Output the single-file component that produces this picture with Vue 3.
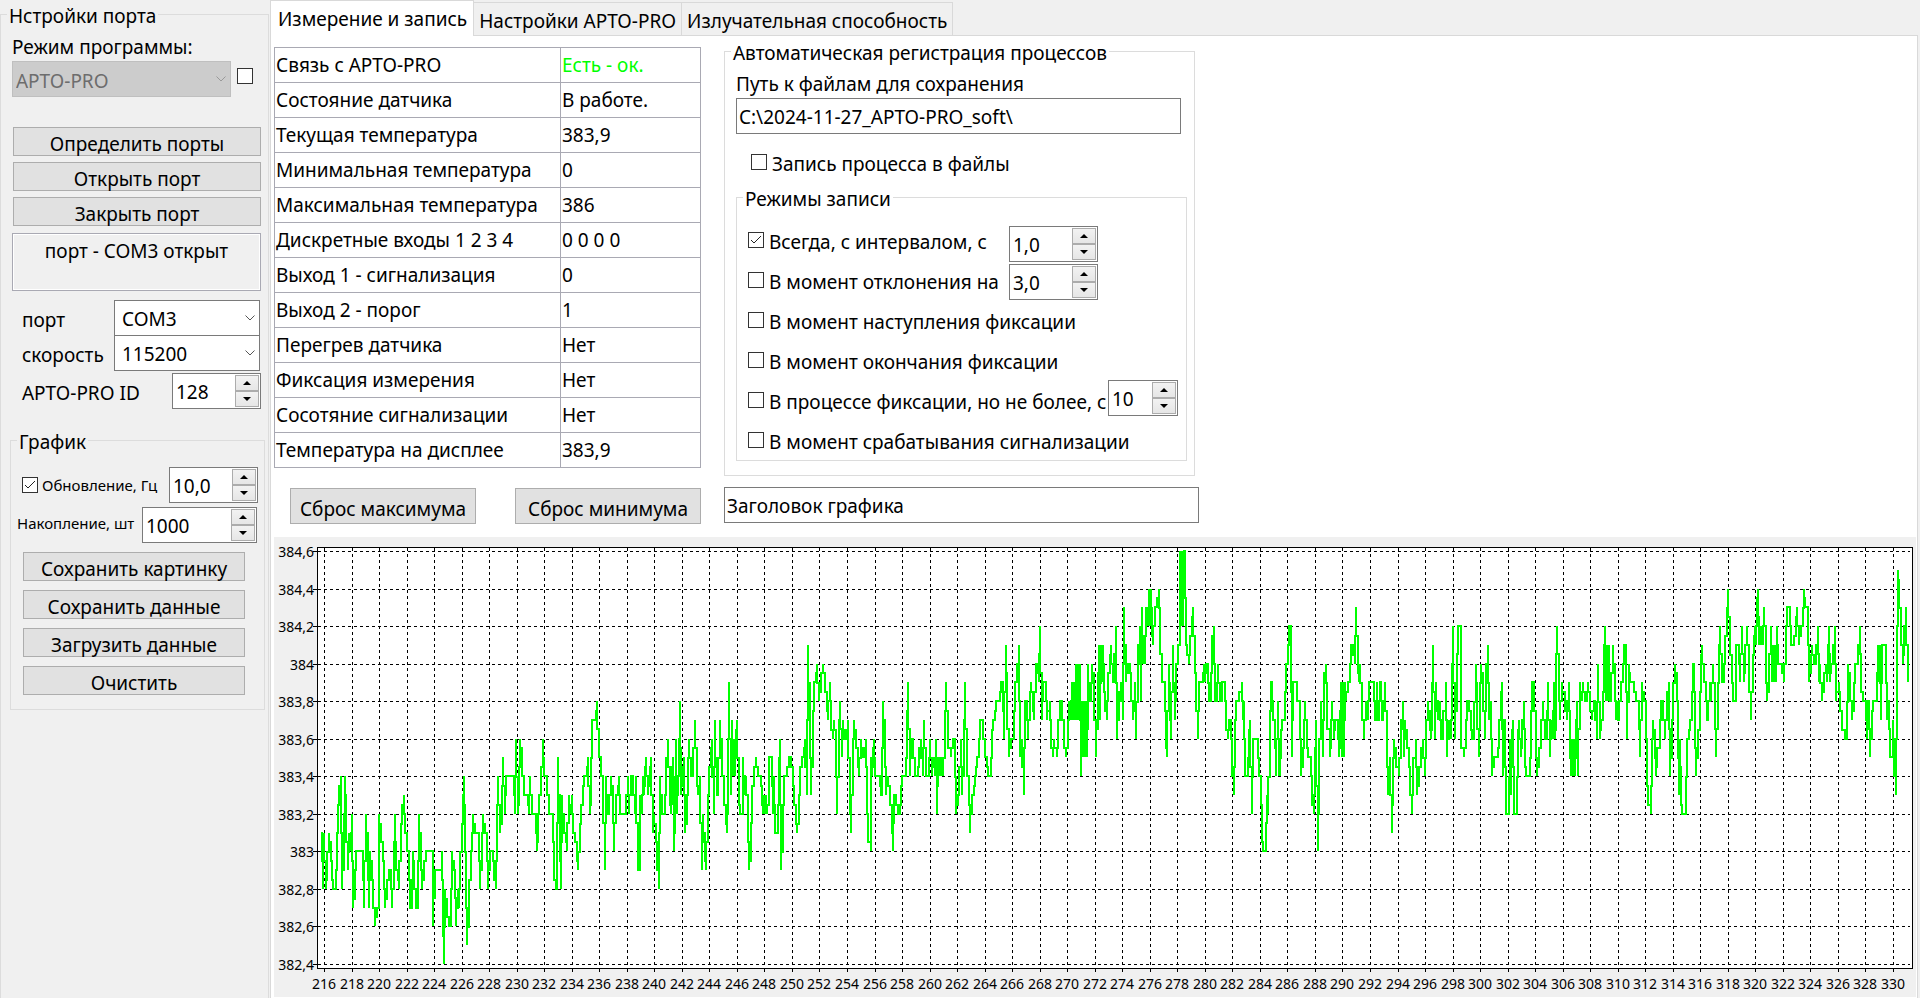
<script setup>
import { ref, computed } from 'vue'

const mode = ref('АРТО-PRO')
const modeUnlocked = ref(false)
const port = ref('COM3')
const speed = ref('115200')
const deviceId = ref('128')
const refresh = ref(true)
const refreshRate = ref('10,0')
const capacity = ref('1000')
const path = ref('C:\\2024-11-27_АРТО-PRO_soft\\')
const record = ref(false)
const interval = ref('1,0')
const deviation = ref('3,0')
const limit = ref('10')
const chartTitle = ref('Заголовок графика')
const modes = ref({ always: true, deviation: false, start: false, end: false, during: false, alarm: false })

const portButtons = ['Определить порты', 'Открыть порт', 'Закрыть порт']
const chartButtons = ['Сохранить картинку', 'Сохранить данные', 'Загрузить данные', 'Очистить']
const tabs = ['Измерение и запись', 'Настройки АРТО-PRO', 'Излучательная способность']
const activeTab = ref(0)

const rows = [
  ['Связь с АРТО-PRO', 'Есть - ок.', true],
  ['Состояние датчика', 'В работе.'],
  ['Текущая температура', '383,9'],
  ['Минимальная температура', '0'],
  ['Максимальная температура', '386'],
  ['Дискретные входы 1 2 3 4', '0 0 0 0'],
  ['Выход 1 - сигнализация', '0'],
  ['Выход 2 - порог', '1'],
  ['Перегрев датчика', 'Нет'],
  ['Фиксация измерения', 'Нет'],
  ['Сосотяние сигнализации', 'Нет'],
  ['Температура на дисплее', '383,9'],
]

// Recorded samples: "position level", level counted in tenths of a degree above 382,4
const segments = [
  { start: -4, data: '152 7,156 7,160 4,163 7,167 4,172 5,178 7,182 6,186 5,190 4,198 4,202 6,205 8,208 9,213 10,217 4,221 6,225 10,229 8,233 5,237 7,243 6,247 8,249 3,254 4,258 6,280 6,283 3,289 8,293 6,297 3,301 6,305 5,310 4,316 2,320 3,326 3,328 8,334 7,338 6,343 5,346 3,350 4,356 5,362 5,367 3,372 5,376 8,379 5,385 5,388 4,392 7,396 8,401 9,404 7,410 7,412 6,418 6,421 3,427 3,430 6,433 5,438 3,445 3,448 8,452 6,457 4,463 5,467 6,488 6,490 2,495 5,515 5,517 6,520 3,523 0,526 4,531 3,537 2,542 2,547 6,551 5,556 5,559 2,565 4,568 3,571 5,575 7,578 8,582 10,586 7,589 5,592 1,597 3,602 6,607 6,610 8,614 7,627 7,631 4,636 6,640 8,644 7,650 7,654 4,660 6,668 6,671 5,677 4,680 7,685 10,691 7,696 8,700 11,705 8,709 10,731 10,735 8,739 12,743 8,747 9,751 12,756 11,762 9,774 9,776 8,781 10,786 8,797 8,800 6,805 7,808 9,814 9,818 12,823 10,830 10,836 8,848 8,851 5,857 4,860 4,865 11,869 7,873 4,877 9,881 7,889 7,892 6,897 9,902 8,907 9,910 7,916 7,920 6,925 5,931 7,934 8,938 9,943 10,950 10,955 11,959 8,964 9,967 13,977 13,982 14,986 11,992 11,994 10,1000 10,1006 5,1008 10,1012 8,1018 8,1024 10,1028 9,1033 6,1037 9,1044 9,1048 10,1051 8,1068 8,1073 10,1078 8,1082 10,1090 10,1095 8,1099 10,1103 5,1109 5,1111 9,1116 8,1120 10,1123 9,1126 10,1129 11,1133 9,1136 10,1139 10,1144 11,1149 7,1153 8,1158 7,1162 6,1167 4,1171 10,1175 8,1184 8,1188 10,1195 12,1199 9,1203 8,1206 10,1209 11,1213 6,1216 8,1219 12,1222 8,1225 10,1228 10,1231 14,1234 9,1237 10,1241 11,1246 7,1251 8,1255 10' },
  { start: 406, data: '28 12,34 10,38 10,46 13,50 10,55 9,60 10,65 5,69 8,74 6,79 5,84 8,88 10,93 11,97 12,103 8,106 13,110 9,115 9,120 13,126 11,131 9,137 8,140 7,144 9,148 15,152 9,155 13,158 10,161 12,164 10,167 12,172 13,176 9,181 8,188 8,190 11,195 9,199 10,203 8,207 5,213 6,217 9,222 10,228 11,234 10,243 10,246 9,249 8,252 9,255 8,258 9,261 8,266 9,268 11,275 11,278 8,282 10,286 7,293 7,296 10,301 12,304 5,309 7,313 10,322 10,328 11,334 11,338 10,343 9,347 8,352 7,357 8,360 10,367 11,372 11,376 12,380 9,385 17,389 13,394 9,399 12,403 15,409 15,412 16,418 14,424 15,429 16,435 15,440 14,445 13,449 15,454 13,459 12,463 13,468 12,472 8,477 12,481 14,486 11,490 13,496 12,501 12,505 13,510 9,514 7,518 11,523 13,528 12,534 11,538 10,542 12,547 11,553 11,557 12,561 9,565 7,572 6,574 11,577 10,580 11,583 12,586 10,599 10,602 9,607 9,610 14,614 12,619 9,624 10,630 9,635 8,640 6,643 9,649 9,654 8,659 8,664 9,667 10,677 10,681 12,685 15,690 10,694 12,698 12,704 10,714 10,718 11,724 12,729 10,733 13,738 10,748 10,751 12,756 10,761 11,764 10,767 12,770 10,772 8,775 11,778 10,781 11,784 10,787 11,790 10,794 12,799 15,804 12,812 11,818 12,825 12,829 8,834 9,837 9,842 12,847 9,851 11,856 15,860 10,866 10,871 7,875 9,881 9,884 10,889 10,891 11,898 11,900 13,908 13,914 11,922 11,924 10,932 10,935 12,939 13,946 13,949 14,959 14,964 15,969 15,973 12,977 17,982 14,988 11,993 12,1001 12,1006 15,1011 15,1016 17,1020 11,1026 12,1031 9,1034 14,1041 14,1045 12,1050 14,1054 15,1059 14,1063 13,1067 16,1073 16,1077 15,1081 18,1085 13,1090 15,1098 15,1101 13,1109 14,1114 12,1118 11,1123 12,1130 11,1135 12,1140 14,1147 14,1153 12,1157 11,1163 12,1166 14,1168 13,1171 14,1174 13,1177 15,1180 13,1183 15,1186 13,1189 16,1192 13,1195 16,1198 13,1200 16,1202 10,1205 14,1208 11,1211 14,1214 11,1217 14,1220 11,1223 14,1225 16,1230 14' },
  { start: 816, data: '2 14,7 16,12 15,19 11,23 14,27 17,30 13,33 17,36 15,38 17,41 15,46 14,50 13,55 15,60 16,64 17,68 15,73 15,77 18,82 12,87 14,93 15,98 13,103 19,108 15,113 16,119 16,124 15,130 13,135 15,139 12,145 16,149 18,152 14,155 19,158 16,161 17,164 16,167 19,173 18,177 20,180 18,183 20,185 18,190 17,195 19,200 19,206 20,211 18,216 15,224 15,227 12,232 11,236 16,241 14,244 12,250 17,254 13,258 15,264 17,269 17,271 22,274 18,277 22,280 18,283 22,286 22,287 17,292 17,296 16,301 17,305 18,310 19,314 16,319 15,325 12,328 15,340 15,343 16,346 15,349 16,353 16,356 14,362 14,366 17,371 18,375 14,381 14,385 16,389 14,395 14,397 15,405 15,409 13,413 12,418 13,424 13,427 11,431 9,434 12,439 14,447 14,455 15,458 13,463 14,466 10,473 10,477 12,481 13,485 8,489 12,503 12,507 10,513 10,516 7,520 6,528 6,530 9,535 8,539 12,543 15,547 15,550 13,556 13,559 10,563 14,566 10,569 12,571 10,573 12,577 13,584 13,587 16,594 16,596 18,602 18,605 11,610 15,620 15,622 14,630 14,633 10,638 11,642 12,646 14,651 12,655 11,662 11,665 9,671 8,674 10,679 13,685 6,688 10,693 14,698 11,703 15,707 16,712 14,719 11,723 12,727 14,732 12,736 13,743 13,746 11,751 12,754 15,757 11,760 15,762 11,765 15,769 14,774 15,780 15,784 17,789 17,794 16,799 19,803 16,807 15,811 16,816 14,823 12,827 14,833 13,836 15,851 15,854 13,859 13,862 15,865 13,868 13,871 15,874 15,877 13,880 13,884 15,886 15,890 12,895 9,901 11,905 7,908 10,913 12,918 11,928 10,932 12,938 14,941 11,946 13,952 12,957 11,961 10,965 8,970 10,977 12,982 9,987 10,992 11,998 12,1004 10,1009 12,1014 14,1019 13,1023 12,1027 13,1030 17,1036 12,1039 15,1043 13,1049 14,1053 12,1059 12,1067 15,1072 11,1077 13,1082 12,1086 14,1090 18,1095 12,1101 15,1105 18,1112 18,1114 12,1122 11,1128 12,1132 14,1138 14,1142 13,1147 12,1152 12,1157 16,1161 14,1166 11,1170 14,1174 16,1180 15,1184 12,1188 15,1193 17,1197 13,1203 14,1207 10,1213 11,1224 11,1228 12,1233 14' },
  { start: 1226, data: '7 15,9 10,12 13,15 13,19 8,26 8,29 12,32 9,35 12,38 13,42 8,50 8,53 12,58 13,62 11,66 12,71 14,75 11,79 10,89 10,92 12,96 15,103 15,107 12,111 10,118 11,124 12,130 14,136 12,140 12,145 15,149 11,154 13,158 12,161 15,164 12,167 13,169 15,172 18,176 15,181 13,187 15,194 14,201 13,207 15,211 12,214 10,217 12,220 10,223 12,226 10,228 12,232 14,235 10,240 15,245 14,249 15,254 14,261 14,265 15,271 14,275 13,281 14,285 14,291 12,295 16,299 12,303 13,308 13,312 16,316 18,319 14,322 17,325 14,328 17,331 14,334 14,340 17,345 15,349 13,352 14,355 13,358 13,362 15,368 15,371 17,378 17,382 12,386 16,391 15,402 15,408 14,418 14,421 11,427 15,431 14,438 14,441 10,445 9,452 8,455 11,460 13,464 12,467 10,472 11,479 12,484 14,490 14,495 12,502 14,508 15,511 10,516 12,520 14,526 16,530 15,535 13,538 9,541 12,543 9,546 8,558 8,560 12,567 12,571 13,575 13,578 16,583 16,586 13,589 10,594 12,599 13,602 16,607 17,611 15,617 15,621 13,625 13,629 15,634 14,640 16,645 14,649 11,654 14,658 16,661 18,666 15,671 15,675 17,680 18,685 20,689 17,695 16,699 14,707 14,709 17,716 17,721 15,727 18,732 15,736 16,741 18,747 16,754 13,758 16,763 17,766 18,769 17,772 19,775 20,778 17,781 18,784 17,787 18,790 17,793 19,797 17,799 16,802 14,807 15,813 18,816 15,819 17,822 15,825 17,828 15,832 18,835 16,845 16,853 15,857 17,861 19,871 19,873 17,883 17,887 18,892 19,896 17,902 18,908 18,912 20,916 19,923 19,926 15,932 16,936 17,941 16,949 16,953 18,957 15,960 16,965 14,971 15,977 16,981 15,984 16,988 18,991 15,994 16,998 16,1004 18,1009 14,1016 15,1020 14,1027 13,1034 12,1040 12,1045 16,1050 15,1055 13,1062 14,1066 16,1075 16,1080 18,1084 15,1090 14,1098 14,1102 12,1105 14,1108 14,1111 11,1116 13,1120 14,1131 14,1135 17,1138 15,1141 17,1144 13,1147 17,1158 17,1161 13,1164 14,1168 14,1171 11,1178 11,1180 13,1183 11,1187 9,1190 15,1193 21,1197 20,1202 18,1208 16,1213 17,1219 19,1224 15' },
]

const levelY = (level) => 427 - Math.round((level * 413) / 22)

// Whole-pixel trace: each move between samples is split at its middle height
const trace = computed(() => {
  const samples = segments.flatMap((s) =>
    s.data.split(',').map((pair) => {
      const [x, level] = pair.split(' ').map(Number)
      return [s.start + Math.round(x / 3), levelY(level)]
    })
  )
  let d = `M${samples[0][0]} ${samples[0][1]}`
  for (let i = 1; i < samples.length; i++) {
    const [x, y] = samples[i]
    const middle = Math.round((samples[i - 1][1] + y) / 2)
    d += `V${middle}H${x}V${y}`
  }
  return d
})

const xTicks = Array.from({ length: 58 }, (_, i) => ({
  label: 216 + i * 2,
  x: 50 + Math.round((i * 1569) / 57),
}))
const yTicks = Array.from({ length: 12 }, (_, i) => ({
  label: String((3824 + i * 2) / 10).replace('.', ','),
  y: levelY(i * 2),
}))
</script>

<template>
  <div class="app">
    <aside class="sidebar">
      <fieldset class="group port-group">
        <legend>Нстройки порта</legend>
        <label class="mode-label" for="mode">Режим программы:</label>
        <div class="mode-row">
          <div class="combo mode-combo">
            <select id="mode" v-model="mode" disabled><option>АРТО-PRO</option></select>
            <svg class="chevron" viewBox="0 0 10 6"><path d="M0.5 0.5 L5 5 L9.5 0.5" /></svg>
          </div>
          <span class="box">
            <input v-model="modeUnlocked" type="checkbox" aria-label="Режим программы" />
            <svg v-if="modeUnlocked" viewBox="0 0 16 16"><path d="M3 8 L6 11 L13 4" /></svg>
          </span>
        </div>
        <div class="port-buttons">
          <button v-for="b in portButtons" :key="b" class="btn" type="button">{{ b }}</button>
        </div>
        <div class="status">порт - COM3 открыт</div>
        <div class="field port-field">
          <label for="port">порт</label>
          <div class="combo">
            <select id="port" v-model="port"><option>COM3</option></select>
            <svg class="chevron" viewBox="0 0 10 6"><path d="M0.5 0.5 L5 5 L9.5 0.5" /></svg>
          </div>
        </div>
        <div class="field speed-field">
          <label for="speed">скорость</label>
          <div class="combo">
            <select id="speed" v-model="speed"><option>115200</option></select>
            <svg class="chevron" viewBox="0 0 10 6"><path d="M0.5 0.5 L5 5 L9.5 0.5" /></svg>
          </div>
        </div>
        <div class="field id-field">
          <label for="device-id">АРТО-PRO ID</label>
          <div class="spin">
            <input id="device-id" v-model="deviceId" type="text" />
            <div class="steps">
              <button type="button" aria-label="Больше"><svg viewBox="0 0 8 4"><path d="M0 4 L4 0 L8 4 Z" /></svg></button>
              <button type="button" aria-label="Меньше"><svg viewBox="0 0 8 4"><path d="M0 0 L4 4 L8 0 Z" /></svg></button>
            </div>
          </div>
        </div>

        <fieldset class="group chart-group">
          <legend>График</legend>
          <div class="small-row">
            <label class="check small">
              <span class="box">
                <input v-model="refresh" type="checkbox" />
                <svg v-if="refresh" viewBox="0 0 16 16"><path d="M3 8 L6 11 L13 4" /></svg>
              </span>
              <span>Обновление, Гц</span>
            </label>
            <div class="spin rate-spin">
              <input v-model="refreshRate" type="text" aria-label="Обновление, Гц" />
              <div class="steps">
                <button type="button" aria-label="Больше"><svg viewBox="0 0 8 4"><path d="M0 4 L4 0 L8 4 Z" /></svg></button>
                <button type="button" aria-label="Меньше"><svg viewBox="0 0 8 4"><path d="M0 0 L4 4 L8 0 Z" /></svg></button>
              </div>
            </div>
          </div>
          <div class="small-row capacity-row">
            <label class="small" for="capacity">Накопление, шт</label>
            <div class="spin capacity-spin">
              <input id="capacity" v-model="capacity" type="text" />
              <div class="steps">
                <button type="button" aria-label="Больше"><svg viewBox="0 0 8 4"><path d="M0 4 L4 0 L8 4 Z" /></svg></button>
                <button type="button" aria-label="Меньше"><svg viewBox="0 0 8 4"><path d="M0 0 L4 4 L8 0 Z" /></svg></button>
              </div>
            </div>
          </div>
          <div class="chart-buttons">
            <button v-for="b in chartButtons" :key="b" class="btn" type="button">{{ b }}</button>
          </div>
        </fieldset>
      </fieldset>
    </aside>

    <main class="main">
      <nav class="tabs" role="tablist">
        <button
          v-for="(t, i) in tabs"
          :key="t"
          class="tab"
          :class="{ active: i === activeTab }"
          type="button"
          role="tab"
          :aria-selected="i === activeTab"
          @click="activeTab = i"
        >{{ t }}</button>
      </nav>

      <section class="pane">
        <div class="columns">
          <div class="left">
            <table class="data">
              <tbody>
                <tr v-for="r in rows" :key="r[0]">
                  <th scope="row">{{ r[0] }}</th>
                  <td :class="{ ok: r[2] }">{{ r[1] }}</td>
                </tr>
              </tbody>
            </table>
            <div class="resets">
              <button class="btn" type="button">Сброс максимума</button>
              <button class="btn" type="button">Сброс минимума</button>
            </div>
          </div>

          <div class="right">
            <fieldset class="group record-group">
              <legend>Автоматическая регистрация процессов</legend>
              <label class="path-label" for="path">Путь к файлам для сохранения</label>
              <input id="path" v-model="path" class="text path" type="text" />
              <label class="check record-check">
                <span class="box">
                  <input v-model="record" type="checkbox" />
                  <svg v-if="record" viewBox="0 0 16 16"><path d="M3 8 L6 11 L13 4" /></svg>
                </span>
                <span class="check-text">Запись процесса в файлы</span>
              </label>

              <fieldset class="group modes-group">
                <legend>Режимы записи</legend>
                <div class="modes">
                  <label class="check">
                    <span class="box">
                      <input v-model="modes.always" type="checkbox" />
                      <svg v-if="modes.always" viewBox="0 0 16 16"><path d="M3 8 L6 11 L13 4" /></svg>
                    </span>
                    <span class="check-text">Всегда, с интервалом, с</span>
                  </label>
                  <label class="check">
                    <span class="box">
                      <input v-model="modes.deviation" type="checkbox" />
                      <svg v-if="modes.deviation" viewBox="0 0 16 16"><path d="M3 8 L6 11 L13 4" /></svg>
                    </span>
                    <span class="check-text">В момент отклонения на</span>
                  </label>
                  <div class="spin-stack">
                    <div class="spin">
                      <input v-model="interval" type="text" aria-label="Интервал, с" />
                      <div class="steps">
                        <button type="button" aria-label="Больше"><svg viewBox="0 0 8 4"><path d="M0 4 L4 0 L8 4 Z" /></svg></button>
                        <button type="button" aria-label="Меньше"><svg viewBox="0 0 8 4"><path d="M0 0 L4 4 L8 0 Z" /></svg></button>
                      </div>
                    </div>
                    <div class="spin">
                      <input v-model="deviation" type="text" aria-label="Отклонение" />
                      <div class="steps">
                        <button type="button" aria-label="Больше"><svg viewBox="0 0 8 4"><path d="M0 4 L4 0 L8 4 Z" /></svg></button>
                        <button type="button" aria-label="Меньше"><svg viewBox="0 0 8 4"><path d="M0 0 L4 4 L8 0 Z" /></svg></button>
                      </div>
                    </div>
                  </div>
                  <label class="check wide">
                    <span class="box">
                      <input v-model="modes.start" type="checkbox" />
                      <svg v-if="modes.start" viewBox="0 0 16 16"><path d="M3 8 L6 11 L13 4" /></svg>
                    </span>
                    <span class="check-text">В момент наступления фиксации</span>
                  </label>
                  <label class="check wide">
                    <span class="box">
                      <input v-model="modes.end" type="checkbox" />
                      <svg v-if="modes.end" viewBox="0 0 16 16"><path d="M3 8 L6 11 L13 4" /></svg>
                    </span>
                    <span class="check-text">В момент окончания фиксации</span>
                  </label>
                  <div class="during wide">
                    <label class="check">
                      <span class="box">
                        <input v-model="modes.during" type="checkbox" />
                        <svg v-if="modes.during" viewBox="0 0 16 16"><path d="M3 8 L6 11 L13 4" /></svg>
                      </span>
                      <span class="check-text">В процессе фиксации, но не более, с</span>
                    </label>
                    <div class="spin limit-spin">
                      <input v-model="limit" type="text" aria-label="Не более, с" />
                      <div class="steps">
                        <button type="button" aria-label="Больше"><svg viewBox="0 0 8 4"><path d="M0 4 L4 0 L8 4 Z" /></svg></button>
                        <button type="button" aria-label="Меньше"><svg viewBox="0 0 8 4"><path d="M0 0 L4 4 L8 0 Z" /></svg></button>
                      </div>
                    </div>
                  </div>
                  <label class="check wide">
                    <span class="box">
                      <input v-model="modes.alarm" type="checkbox" />
                      <svg v-if="modes.alarm" viewBox="0 0 16 16"><path d="M3 8 L6 11 L13 4" /></svg>
                    </span>
                    <span class="check-text">В момент срабатывания сигнализации</span>
                  </label>
                </div>
              </fieldset>
            </fieldset>
            <input v-model="chartTitle" class="text title" type="text" aria-label="Заголовок графика" />
          </div>
        </div>

        <svg class="chart" viewBox="0 0 1642 460" role="img" aria-label="График температуры">
          <rect class="plot" x="43.5" y="10.5" width="1595" height="421" />
          <g class="grid">
            <path v-for="t in yTicks" :key="t.label" :d="`M44 ${t.y + 0.5} H1636`" />
            <path v-for="t in xTicks" :key="t.label" :d="`M${t.x + 0.5} 11 V431`" />
          </g>
          <g class="ticks">
            <path v-for="t in yTicks" :key="t.label" :d="`M39 ${t.y + 0.5} H44`" />
            <path v-for="t in xTicks" :key="t.label" :d="`M${t.x + 0.5} 431 V435`" />
          </g>
          <path class="series" :d="trace" />
          <g class="y-labels">
            <text v-for="t in yTicks" :key="t.label" x="40" :y="t.y + 6">{{ t.label }}</text>
          </g>
          <g class="x-labels">
            <text v-for="t in xTicks" :key="t.label" :x="t.x" y="452">{{ t.label }}</text>
          </g>
        </svg>
      </section>
    </main>
  </div>
</template>

<style>
body {
  background: #f0f0f0;
}
</style>

<style scoped>
.app,
.app * {
  box-sizing: border-box;
}
.app {
  display: grid;
  grid-template-columns: 270px minmax(0, 1fr);
  min-height: 100vh;
  background: #f0f0f0;
  color: #000;
  font-family: "Noto Sans", "Open Sans", sans-serif;
  font-size: 19px;
  line-height: 28px;
}
.app button,
.app input,
.app select {
  margin: 0;
  font: inherit;
  color: inherit;
}
.group {
  min-width: 0;
  margin: 0;
  padding: 0;
  border: 1px solid #dcdcdc;
}
.group > legend {
  margin-left: 6px;
  padding: 4px 2px 0;
  line-height: 24px;
  white-space: nowrap;
}
.sidebar {
  display: flex;
  padding-right: 1px;
}
.port-group {
  flex: 1;
  border-bottom: 0;
  padding: 0 7px 0 11px;
}
.port-group > legend {
  margin-left: -5px;
}
.chart-group > legend {
  margin-left: 0;
}
.record-group > legend {
  margin-left: -5px;
}
.mode-label {
  display: block;
  margin-top: 5px;
}
.mode-row {
  display: flex;
  gap: 6px;
}
.mode-row .box {
  margin-top: 7px;
}
.combo {
  position: relative;
  width: 146px;
  height: 36px;
}
.mode-combo {
  width: 219px;
}
.combo select {
  width: 100%;
  height: 100%;
  padding: 2px 24px 0 7px;
  appearance: none;
  background: #fff;
  border: 1px solid #7a7a7a;
  border-radius: 0;
}
.app .mode-combo select {
  padding: 4px 24px 0 3px;
  background: #ccc;
  border-color: #bfbfbf;
  color: #6d6d6d;
  opacity: 1;
}
.chevron {
  position: absolute;
  right: 5px;
  top: 15px;
  width: 10px;
  height: 6px;
  fill: none;
  stroke: #555;
  pointer-events: none;
}
.mode-combo .chevron {
  stroke: #999;
}
.box {
  position: relative;
  flex: none;
  display: block;
  width: 16px;
  height: 16px;
}
.box input {
  display: block;
  width: 16px;
  height: 16px;
  appearance: none;
  background: #fff;
  border: 1px solid #333;
}
.box svg {
  position: absolute;
  inset: 0;
  fill: none;
  stroke: #222;
  pointer-events: none;
}
.app .btn {
  height: 29px;
  padding: 6px 0 0;
  background: #e1e1e1;
  border: 1px solid #adadad;
  border-radius: 0;
  line-height: 21px;
  white-space: nowrap;
}
.port-buttons {
  display: grid;
  gap: 6px;
  margin: 30px 0 0 1px;
}
.status {
  height: 58px;
  margin-top: 7px;
  padding-top: 3px;
  border: 1px solid #a9a9b3;
  outline: 1px solid #fff;
  outline-offset: -2px;
  text-align: center;
}
.field {
  display: flex;
  align-items: center;
  justify-content: space-between;
  padding: 0 1px 0 10px;
}
.field label {
  padding-top: 4px;
  white-space: nowrap;
}
.port-field {
  margin-top: 9px;
}
.speed-field {
  margin-top: -1px;
}
.id-field {
  margin-top: 2px;
  padding-right: 0;
}
.spin {
  flex: none;
  display: flex;
  width: 89px;
  height: 36px;
  padding: 1px;
  background: #fff;
  border: 1px solid #7a7a7a;
}
.spin input {
  flex: 1;
  min-width: 0;
  padding: 2px 0 0 2px;
  background: none;
  border: 0;
}
.steps {
  display: grid;
  grid-template-rows: 1fr 1fr;
  width: 24px;
}
.steps button {
  display: grid;
  place-items: center;
  padding: 0;
  background: linear-gradient(#f2f2f2, #e6e6e6);
  border: 1px solid #acacac;
}
.steps svg {
  width: 8px;
  height: 4px;
}
.chart-group {
  margin: 17px -4px 0 -2px;
  padding: 0 6px 14px;
}
.small-row {
  display: flex;
  align-items: center;
  justify-content: space-between;
  margin-top: 13px;
  padding-left: 5px;
}
.small {
  font-size: 15px;
  white-space: nowrap;
}
.small.check {
  gap: 4px;
}
.capacity-row {
  margin-top: 4px;
  padding: 0 1px 0 0;
}
.capacity-row .small {
  padding-bottom: 4px;
}
.capacity-spin {
  width: 115px;
}
.chart-buttons {
  display: grid;
  gap: 9px;
  margin: 9px 13px 0 6px;
}
.check {
  display: flex;
  align-items: center;
  gap: 5px;
  white-space: nowrap;
}
.check-text {
  padding-top: 4px;
}
.main {
  display: flex;
  flex-direction: column;
  min-width: 0;
  padding-right: 2px;
}
.tabs {
  position: relative;
  display: flex;
  align-items: flex-end;
  height: 36px;
  margin-bottom: -1px;
}
.app .tab {
  height: 34px;
  padding: 3px 5px 0;
  background: #f0f0f0;
  border: 1px solid #d9d9d9;
  border-left: 0;
  white-space: nowrap;
}
.app .tab.active {
  height: 36px;
  padding: 0 6px 0 7px;
  background: #fff;
  border-left: 1px solid #d9d9d9;
  border-bottom: 0;
}
.pane {
  flex: 1;
  padding: 0 1px 1px 3px;
  background: #fff;
  border: 1px solid #d9d9d9;
  border-bottom: 0;
}
.columns {
  display: flex;
  gap: 23px;
}
.left {
  width: 427px;
  padding-top: 11px;
}
.data {
  width: 100%;
  table-layout: fixed;
  border-collapse: collapse;
}
.data th,
.data td {
  height: 35px;
  padding: 0 0 0 1px;
  border: 1px solid #a9a9b3;
  font-weight: 400;
  text-align: left;
  white-space: nowrap;
}
.data th {
  width: 286px;
}
.data .ok {
  color: #0f0;
}
.resets {
  display: grid;
  grid-template-columns: 1fr 1fr;
  gap: 39px;
  margin: 20px 0 0 16px;
}
.app .resets .btn {
  height: 36px;
}
.right {
  width: 475px;
  padding-top: 1px;
}
.record-group {
  margin-right: 4px;
  padding: 0 7px 14px 11px;
}
.path-label {
  display: block;
  margin-top: 5px;
}
.app .text {
  display: block;
  height: 36px;
  padding: 2px 2px 0;
  background: #fff;
  border: 1px solid #7a7a7a;
}
.app .path {
  width: 445px;
}
.record-check {
  margin: 14px 0 0 15px;
  height: 28px;
}
.modes-group {
  margin-top: 7px;
}
.modes {
  display: grid;
  grid-template-columns: 261px 1fr;
  grid-auto-rows: 40px;
  padding: 9px 8px 0 11px;
}
.modes .check {
  grid-column: 1;
}
.spin-stack {
  grid-column: 2;
  grid-row: 1 / 3;
  align-self: end;
  display: grid;
  gap: 2px;
}
.modes .wide {
  grid-column: 1 / 3;
}
.during {
  display: flex;
  align-items: flex-start;
  justify-content: space-between;
}
.during .check {
  height: 40px;
}
.limit-spin {
  width: 70px;
}
.app .title {
  width: 100%;
  margin-top: 11px;
}
.chart {
  display: block;
  width: 100%;
  height: auto;
  margin-top: 13px;
  background: #f0f0f0;
}
.plot {
  fill: #fff;
  stroke: #000;
}
.grid path {
  stroke: #000;
  stroke-dasharray: 3 3;
}
.ticks path {
  stroke: #000;
}
.plot,
.grid,
.ticks,
.series {
  shape-rendering: crispEdges;
}
.series {
  fill: none;
  stroke: #0f0;
  stroke-width: 2;
}
.chart text {
  font-size: 14px;
}
.y-labels {
  text-anchor: end;
}
.x-labels {
  text-anchor: middle;
}
</style>
